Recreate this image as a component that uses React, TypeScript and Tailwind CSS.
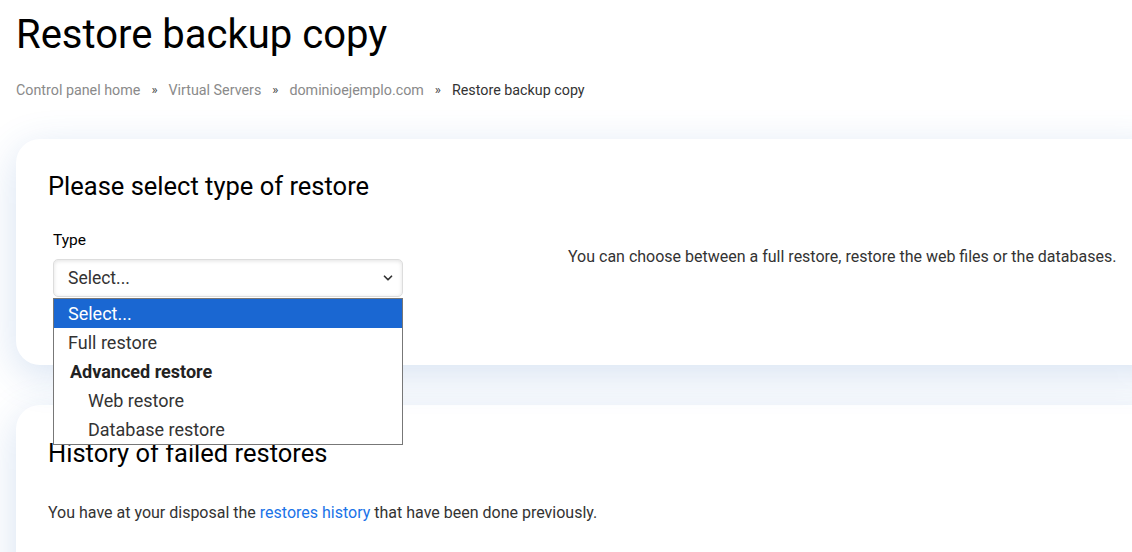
import { ChevronDown } from "lucide-react";

const crumbs = ["Control panel home", "Virtual Servers", "dominioejemplo.com"];

const options = [
  { label: "Select...", active: true },
  { label: "Full restore" },
  { label: "Advanced restore", group: true },
  { label: "Web restore", nested: true },
  { label: "Database restore", nested: true },
];

const App = () => {
  return (
    <div className="w-full h-[552px] overflow-hidden bg-white font-['Roboto',sans-serif] text-[#333]">
      <div className="pl-4 pt-[11px]">
        <h1 className="text-[40px] leading-[48px] text-black">Restore backup copy</h1>

        {/* Breadcrumb */}
        <div className="flex items-center mt-[21px] text-[14.3px] leading-[20px]">
          {crumbs.map((c) => (
            <span key={c} className="flex items-center">
              <span className="text-[#8a8a8a]">{c}</span>
              <span className="mx-[11px] text-[#444] text-[13px]">»</span>
            </span>
          ))}
          <span className="text-[#333]">Restore backup copy</span>
        </div>
      </div>

      <div className="flex flex-col gap-10 pl-4 mt-[39px] -mr-10">
        {/* Card: type of restore */}
        <div className="relative bg-white rounded-[24px] shadow-[0_10px_40px_rgba(50,110,190,0.2)] pl-8 pt-[31px] pb-[68px] flex">
          <div className="w-[505px]">
            <h2 className="text-[25.5px] leading-[32px] text-black">Please select type of restore</h2>
            <div className="pl-[5px] mt-[28px]">
              <label className="block text-[15.5px] leading-[20px] text-black">Type</label>
              <div className="relative mt-[9px] w-[350px]">
                <div className="flex items-center justify-between h-[38px] rounded-[5px] border border-[#ddd] shadow-[inset_0_1px_4px_rgba(0,0,0,0.12)] pl-[14px] pr-[7px] text-[17.5px] text-[#333]">
                  <span>Select...</span>
                  <ChevronDown size={14} strokeWidth={3} className="text-[#333]" />
                </div>

                {/* Open dropdown list */}
                <ul className="absolute z-10 left-0 top-[39px] w-[350px] bg-white border border-[#777] text-[18px] leading-[29px]">
                  {options.map((o) => (
                    <li
                      key={o.label}
                      className={
                        o.active
                          ? "bg-[#1a67d2] text-white pl-[14px]"
                          : o.group
                          ? "font-bold pl-4 text-[#222]"
                          : o.nested
                          ? "pl-[34px] text-[#333]"
                          : "pl-[14px] text-[#333]"
                      }
                    >
                      {o.label}
                    </li>
                  ))}
                </ul>
              </div>
            </div>
          </div>
          <p className="ml-[15px] mt-[75px] text-[16px] leading-[24px] text-[#333]">
            You can choose between a full restore, restore the web files or the databases.
          </p>
        </div>

        {/* Card: history */}
        <div className="bg-white rounded-[24px] shadow-[0_10px_40px_rgba(50,110,190,0.2)] pl-8 pt-[32px] pb-20">
          <h2 className="text-[25.5px] leading-[32px] text-black">History of failed restores</h2>
          <p className="mt-[32px] text-[16px] leading-[24px] text-[#333]">
            You have at your disposal the{" "}
            <a href="#" className="text-[#1a73e8]">
              restores history
            </a>{" "}
            that have been done previously.
          </p>
        </div>
      </div>
    </div>
  );
};

export default App;
